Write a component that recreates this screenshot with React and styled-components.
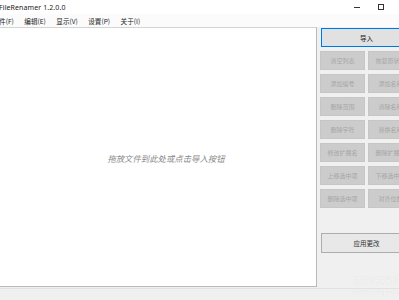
import React from 'react';
import styled, { createGlobalStyle } from 'styled-components';

const GlobalStyle = createGlobalStyle`
  html, body {
    margin: 0;
    padding: 0;
    width: 399px;
    height: 300px;
    overflow: hidden;
    background: #f0f0f0;
  }
`;

const tools = [
  '清空列表', '恢复原状态',
  '添加编号', '添加名称',
  '删除范围', '清除名称',
  '删除字符', '替换名称',
  '修改扩展名', '删除扩展名',
  '上移选中项', '下移选中项',
  '删除选中项', '对齐位数',
];

const App = () => (
  <>
    <GlobalStyle />
    <Window>
      <TitleBar>
        <Title>FileRenamer 1.2.0.0</Title>
        <Controls>
          <svg width="10" height="10" viewBox="0 0 10 10">
            <line x1="2" y1="5.5" x2="8" y2="5.5" stroke="#333" strokeWidth="1" />
          </svg>
          <svg width="10" height="10" viewBox="0 0 10 10">
            <rect x="2.5" y="2.5" width="5" height="5" fill="none" stroke="#333" strokeWidth="1" />
          </svg>
        </Controls>
      </TitleBar>
      <MenuBar>
        {['文件(F)', '编辑(E)', '显示(V)', '设置(P)', '关于(I)'].map(m => (
          <MenuItem key={m}>{m}</MenuItem>
        ))}
      </MenuBar>
      <Body>
        <DropArea>
          <Hint>拖放文件到此处或点击导入按钮</Hint>
        </DropArea>
        <Side>
          <PrimaryButton>导入</PrimaryButton>
          <ToolGrid>
            {tools.map(t => (
              <ToolButton key={t} disabled>{t}</ToolButton>
            ))}
          </ToolGrid>
          <ApplyButton>应用更改</ApplyButton>
        </Side>
      </Body>
      <StatusBar />
      <Watermark>
        <span>吾爱破解论坛</span>
        <small>www.52pojie.cn</small>
      </Watermark>
    </Window>
  </>
);

export default App;

const Window = styled.div`
  position: relative;
  width: 420px;
  height: 300px;
  background: #f0f0f0;
  display: flex;
  flex-direction: column;
  font-family: "Noto Sans", "Noto Sans CJK SC", sans-serif;
`;

const TitleBar = styled.div`
  height: 14px;
  background: #ffffff;
  display: flex;
  align-items: center;
  justify-content: space-between;
  padding-right: 34px;
`;

const Title = styled.div`
  font-size: 7px;
  color: #222;
  margin-left: -1px;
  letter-spacing: 0.1px;
`;

const Controls = styled.div`
  display: flex;
  gap: 14px;
  margin-top: -1px;
`;

const MenuBar = styled.div`
  height: 13px;
  background: #fbfbfb;
  display: flex;
  align-items: center;
  margin-left: -8px;
  gap: 9.5px;
`;

const MenuItem = styled.span`
  font-family: "Noto Sans CJK SC", sans-serif;
  font-size: 6.6px;
  color: #222;
  padding: 0 0.5px;
`;

const Body = styled.div`
  display: flex;
  height: 260px;
`;

const DropArea = styled.div`
  width: 316px;
  background: #ffffff;
  border: 1px solid #b9b9b9;
  border-top-color: #d4d4d4;
  border-left: none;
  display: flex;
  align-items: center;
  justify-content: center;
  padding-left: 16px;
  box-sizing: content-box;
  margin-left: -16px;
  margin-right: 2px;
`;

const Hint = styled.span`
  font-family: "Noto Sans CJK SC", sans-serif;
  font-style: italic;
  font-size: 8.4px;
  color: #8a8a8a;
  margin-top: 1px;
  margin-left: 16px;
`;

const Side = styled.div`
  display: flex;
  flex-direction: column;
  padding-top: 1px;
  width: 93px;
`;

const BaseButton = styled.button`
  font-family: "Noto Sans CJK SC", sans-serif;
  margin: 0;
  padding: 0;
  display: flex;
  align-items: center;
  justify-content: center;
  box-sizing: border-box;
`;

const PrimaryButton = styled(BaseButton)`
  height: 19px;
  margin-left: 2px;
  background: #e1e1e1;
  border: 1px solid #0078d7;
  box-shadow: inset 0 0 0 1px #cfe4f6;
  font-size: 6.5px;
  color: #222;
`;

const ToolGrid = styled.div`
  display: grid;
  grid-template-columns: 45px 45px;
  grid-auto-rows: 19px;
  column-gap: 3px;
  row-gap: 4px;
  margin-top: 4px;
  margin-left: 1px;
`;

const ToolButton = styled(BaseButton)`
  background: #cccccc;
  border: 1px solid #c6c6c6;
  font-size: 6px;
  color: #a6a6a6;
  white-space: nowrap;
  overflow: hidden;
`;

const ApplyButton = styled(BaseButton)`
  height: 20px;
  margin-top: 25px;
  margin-left: 2px;
  background: #e8e8e8;
  border: 1px solid #adadad;
  font-size: 6.5px;
  color: #333;
`;

const StatusBar = styled.div`
  flex: 1;
  border-top: 1px solid #e2e2e2;
  margin-top: 1px;
  background: #f0f0f0;
`;

const Watermark = styled.div`
  position: absolute;
  left: 353px;
  top: 276px;
  display: flex;
  flex-direction: column;
  gap: 3px;
  line-height: 1;
  color: rgba(255, 255, 255, 0.9);
  text-shadow: 0 0 1px rgba(0, 0, 0, 0.15);
  font-family: "Noto Sans CJK SC", sans-serif;

  span {
    font-size: 9px;
    letter-spacing: 0.3px;
  }

  small {
    font-family: "Noto Sans", sans-serif;
    font-size: 7.5px;
    letter-spacing: 0.4px;
  }
`;
